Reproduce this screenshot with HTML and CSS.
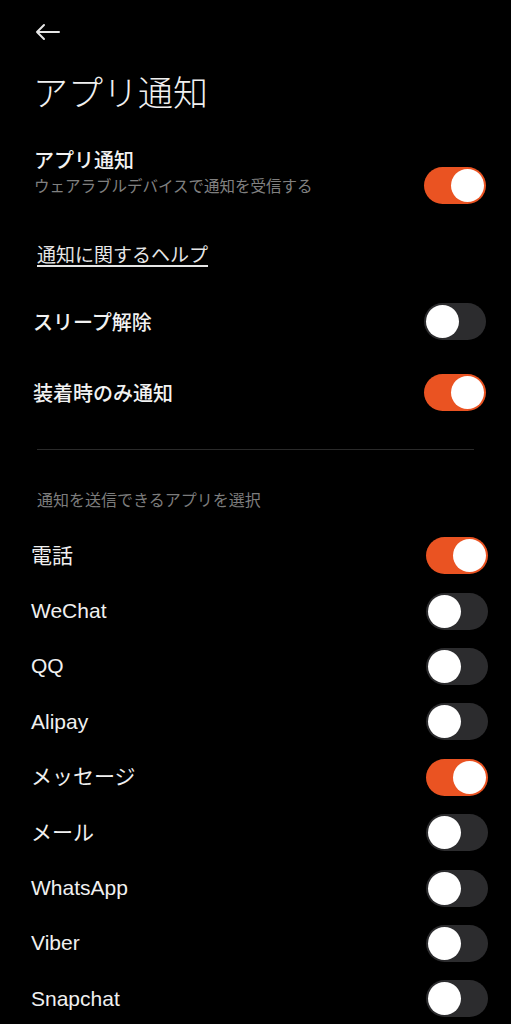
FILE: index.html
```html
<!DOCTYPE html>
<html lang="ja">
<head>
  <meta charset="UTF-8" />
  <title>アプリ通知</title>
  <link rel="stylesheet" href="styles.css">
</head>
<body>

<header class="topbar">
  <svg class="back" width="26" height="18" viewBox="0 0 26 18">
    <path d="M3 9H25M10 2L3 9L10 16" fill="none" stroke="#e6e6e6" stroke-width="2" stroke-linecap="round" stroke-linejoin="round"/>
  </svg>
</header>

<main>
  <h1>アプリ通知</h1>

  <div class="row main-row">
    <div class="text">
      <div class="label">アプリ通知</div>
      <div class="sub">ウェアラブルデバイスで通知を受信する</div>
    </div>
    <span class="switch on"></span>
  </div>

  <a class="help" href="#">通知に関するヘルプ</a>

  <div class="row opt">
    <div class="label">スリープ解除</div>
    <span class="switch"></span>
  </div>
  <div class="row opt">
    <div class="label">装着時のみ通知</div>
    <span class="switch on"></span>
  </div>

  <hr class="divider">

  <div class="section">通知を送信できるアプリを選択</div>

  <div class="apps">
    <div class="row app"><span>電話</span><span class="switch on"></span></div>
    <div class="row app"><span>WeChat</span><span class="switch"></span></div>
    <div class="row app"><span>QQ</span><span class="switch"></span></div>
    <div class="row app"><span>Alipay</span><span class="switch"></span></div>
    <div class="row app"><span>メッセージ</span><span class="switch on"></span></div>
    <div class="row app"><span>メール</span><span class="switch"></span></div>
    <div class="row app"><span>WhatsApp</span><span class="switch"></span></div>
    <div class="row app"><span>Viber</span><span class="switch"></span></div>
    <div class="row app"><span>Snapchat</span><span class="switch"></span></div>
  </div>
</main>

</body>
</html>
```

FILE: styles.css
```css
body {
  font-family: "Liberation Sans", "Noto Sans CJK JP", sans-serif;
  background: #000;
  color: #f2f2f2;
  margin: 0; padding: 0;
}
.topbar {
  height: 64px;
  padding-left: 34px;
  display: flex;
  align-items: center;
}
.back {
  display: block;
}
h1 {
  font-family: "Noto Sans CJK JP", sans-serif;
  font-weight: 300;
  font-size: 35px;
  line-height: 44px;
  margin: 5px 0 0 0;
  padding-left: 33px;
  color: #f0f0f0;
}
.row {
  display: flex;
  justify-content: space-between;
  align-items: center;
}
.main-row {
  margin-top: 34px;
  padding: 0 25px 0 34px;
  align-items: flex-start;
}
.main-row .switch {
  margin-top: 20px;
}
.label {
  font-family: "Noto Sans CJK JP", sans-serif;
  font-weight: 500;
  font-size: 20px;
  line-height: 26px;
  color: #f2f2f2;
}
.sub {
  font-family: "Noto Sans CJK JP", sans-serif;
  font-size: 15.5px;
  line-height: 24px;
  color: #808080;
}
.help {
  display: inline-block;
  margin: 37px 0 0 37px;
  font-family: "Noto Sans CJK JP", sans-serif;
  font-size: 19px;
  line-height: 26px;
  color: #e6e6e6;
  text-decoration: underline;
  text-underline-offset: 3px;
  text-decoration-thickness: 1.5px;
}
.opt {
  height: 71px;
  padding: 0 25px 0 33px;
}
.help + .opt {
  margin-top: 19px;
}
.divider {
  border: none;
  border-top: 1px solid #2a2a2a;
  margin: 21px 37px 0 37px;
}
.section {
  font-family: "Noto Sans CJK JP", sans-serif;
  font-size: 16px;
  line-height: 22px;
  color: #7c7c7c;
  margin-top: 38px;
  padding-left: 37px;
}
.apps {
  margin-top: 18px;
}
.app {
  height: 55.4px;
  padding: 0 23px 0 31px;
  font-size: 21px;
  line-height: 26px;
  color: #f0f0f0;
}
.switch {
  position: relative;
  display: block;
  width: 62px;
  height: 37px;
  border-radius: 19px;
  background: #2c2c2e;
  flex-shrink: 0;
}
.switch::after {
  content: "";
  position: absolute;
  top: 2px;
  left: 2px;
  width: 33px;
  height: 33px;
  border-radius: 50%;
  background: #fff;
}
.switch.on {
  background: #ea5322;
}
.switch.on::after {
  left: 27px;
}
```
